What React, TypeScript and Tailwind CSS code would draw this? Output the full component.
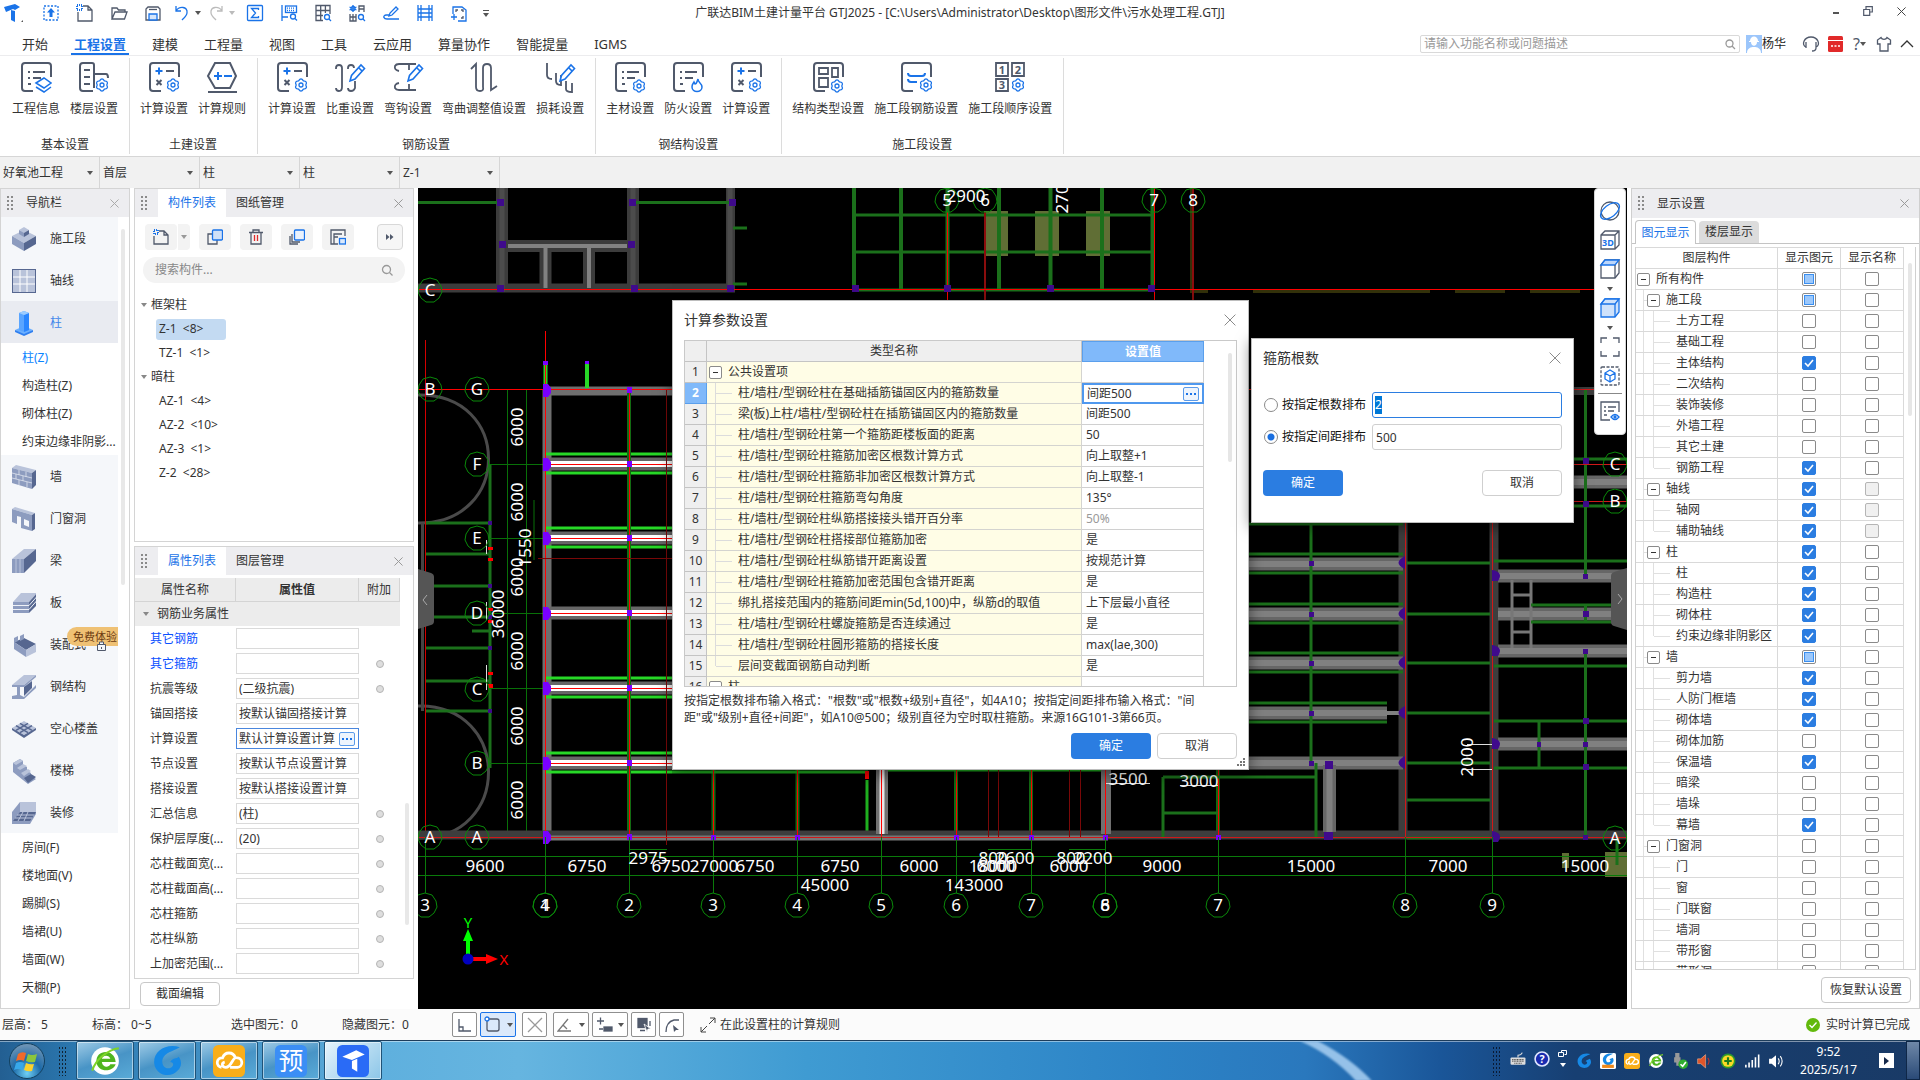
import React from 'react';

const FONT = "font-['Noto_Sans','Noto_Sans_CJK_SC',sans-serif]";
const D = '#50596b';
const B = '#1a73e8';

function Svg({ s = 18, children, vb }: { s?: number; children: React.ReactNode; vb?: string }) {
  return (
    <svg width={s} height={s} viewBox={vb ?? `0 0 ${s} ${s}`} fill="none" stroke={D} strokeWidth={1.3} className="shrink-0" aria-hidden="true">
      {children}
    </svg>
  );
}

function Caret({ color = '#555' }: { color?: string }) {
  return (
    <svg width="6" height="4" viewBox="0 0 6 4" className="shrink-0" aria-hidden="true">
      <path d="M0 0h6L3 4z" fill={color} />
    </svg>
  );
}

function Cross({ s = 10, color = '#8a8a8a' }: { s?: number; color?: string }) {
  return (
    <svg width={s} height={s} viewBox="0 0 10 10" stroke={color} strokeWidth={10 / s} aria-hidden="true">
      <path d="M.5 .5l9 9M9.5 .5l-9 9" />
    </svg>
  );
}

function Grip() {
  return (
    <svg width="7" height="15" viewBox="0 0 7 15" fill="#8a8a8a" className="shrink-0" aria-hidden="true">
      {[0, 4, 8, 12].map((y) => (
        <g key={y}>
          <rect x="0" y={y} width="2" height="2" />
          <rect x="4" y={y} width="2" height="2" />
        </g>
      ))}
    </svg>
  );
}

function Gear({ x, y, k = 1 }: { x: number; y: number; k?: number }) {
  return (
    <g transform={`translate(${x} ${y}) scale(${k})`} stroke={B} strokeWidth={1.3}>
      <path fill="#fff" d="M-2.4-4.2Q0-8 2.4-4.2Q6.8-3.9 4.8 0Q6.8 3.9 2.4 4.2Q0 8-2.4 4.2Q-6.8 3.9-4.8 0Q-6.8-3.9-2.4-4.2z" />
      <circle r="2" />
    </g>
  );
}

/* ---------- title bar ---------- */

const quick: { name: string; icon: React.ReactNode; caret?: string }[] = [
  { name: '升级', icon: <Svg><rect x="2" y="2" width="14" height="14" stroke={B} strokeDasharray="2 1.5" /><path d="M9 4l4 4.500h-2.500V13h-3V8.500H5z" fill={B} stroke="none" /></Svg> },
  { name: '新建', icon: <Svg><path d="M7 2h5l4 4v11H2V8M12 2v4h4" /><path d="M1 1h5v5H1z" stroke={B} strokeDasharray="1 1" strokeWidth="2" /></Svg> },
  { name: '打开', icon: <Svg><path d="M2 15V4h5l1.500 2H15v2M2 15l3-7h12l-2.500 7z" /></Svg> },
  { name: '保存', icon: <Svg><path d="M2 5V16h14V5l-2-2H4z" /><path d="M5 10h8v6H5z" stroke={B} fill="#d6e6fb" /><path d="M5 5.500h8" /></Svg> },
  { name: '撤销', icon: <Svg><path d="M3 2v5h5M3 7c3-5 12-5 11 2-.4 3-3 5-5 7" stroke={B} /></Svg>, caret: '#555' },
  { name: '恢复', icon: <Svg><path d="M15 2v5h-5M15 7C12 2 3 2 4 9c.4 3 3 5 5 7" stroke="#bbb" /></Svg>, caret: '#bbb' },
  { name: '汇总计算', icon: <Svg><rect x="1.500" y="1.500" width="15" height="15" rx="1" stroke={B} /><path d="M12.500 6V4.500h-7L9.500 9l-4 4.500h7V12" stroke={B} /></Svg> },
  { name: '查看工程量', icon: <Svg><path d="M2 1v16M2 13h6" stroke={B} /><rect x="5.500" y="2" width="11" height="6.500" stroke={B} /><path d="M7 4.200h8M7 6.500h8" stroke={B} strokeDasharray="1 1" /><circle cx="13" cy="12.500" r="2.500" stroke={B} /><path d="M15 14.500l2 2" stroke={B} /></Svg> },
  { name: '查看报表', icon: <Svg><path d="M9 16.500H2v-15h14V10M2 6.500h14M2 11.500h7M6.700 1.500v15M11.400 1.500V9" stroke={D} /><circle cx="13" cy="13" r="2.500" stroke={B} /><path d="M15 15l2 2" stroke={B} /></Svg> },
  { name: '查找', icon: <Svg><path d="M5 1v7M1.500 3l7 3M8.500 3l-7 3" stroke={B} /><circle cx="5" cy="4.500" r="2" stroke={B} /><path d="M11 8V2h5v6M11 5h5M2 10v7h6v-7M2 13h6M5 10v7" /><circle cx="13" cy="13" r="2.500" stroke={B} /><path d="M15 15l2 2" stroke={B} /></Svg> },
  { name: '编辑', icon: <Svg><path d="M7 12l1-3 6-6 2 2-6 6z" stroke={B} /><path d="M7 11H4c-4 1-2 4 1 4h12" stroke={B} /></Svg> },
  { name: '楼层', icon: <Svg><path d="M2 1v16M16 1v16M5 1v16M13 1v16M2 5h14M2 9h14M2 13h14" stroke={B} /></Svg> },
  { name: '选区', icon: <Svg><path d="M3 10V3h9l4 3v11H8" stroke={B} /><path d="M6 8V6h2M13 8V6h-2M13 12v2h-2" /><path d="M1 13h6M4 10v6" stroke={B} /></Svg> },
];

function TitleBar() {
  return (
    <header className="flex h-[26px] shrink-0 items-center bg-white">
      <div className="flex w-1/3 items-center">
        <div className="flex w-[34px] pl-1">
          <svg width="20" height="20" viewBox="0 0 20 20" aria-hidden="true">
            <path d="M0 4L11 1l5 3-5 3-2-1-7 3zM7 7l4 1v11l-4-2z" fill={B} />
            <path d="M17 19l2-2v2z" fill="#555" />
          </svg>
        </div>
        {quick.map((q) => (
          <button key={q.name} aria-label={q.name} className="flex w-[34px] items-center justify-center gap-1">
            {q.icon}
            {q.caret && <Caret color={q.caret} />}
          </button>
        ))}
        <button aria-label="更多" className="flex w-5 flex-col items-center gap-0.5">
          <span className="h-px w-1.5 bg-[#555]" />
          <Caret />
        </button>
      </div>
      <h1 className="w-1/3 whitespace-nowrap text-center text-xs leading-4 text-[#333]">
        广联达BIM土建计量平台 GTJ2025 - [C:\Users\Administrator\Desktop\图形文件\污水处理工程.GTJ]
      </h1>
      <div className="flex w-1/3 items-center justify-end gap-6 pr-3.5 pb-1">
        <button aria-label="最小化"><span className="mt-1 block h-0.5 w-1.5 bg-[#555]" /></button>
        <button aria-label="还原"><Svg s={10}><path d="M3 3V.7h6.300V6H7M.7 3.500h6v5.800h-6z" strokeWidth="1.200" /></Svg></button>
        <button aria-label="关闭"><Cross s={9} color="#444" /></button>
      </div>
    </header>
  );
}

const tabs = ['开始', '工程设置', '建模', '工程量', '视图', '工具', '云应用', '算量协作', '智能提量', 'IGMS'];

function MenuBar() {
  return (
    <nav className="flex h-[30px] shrink-0 items-end border-b border-[#ececee] bg-white pl-[9px] text-[13px]">
      {tabs.map((t) => (
        <button key={t} className={`mx-[10px] h-6 whitespace-nowrap border-b-2 px-[3px] pt-1 leading-4 ${t === '工程设置' ? 'border-[#1a73e8] font-bold text-[#1a73e8]' : 'border-transparent text-[#333]'}`}>
          {t}
        </button>
      ))}
      <div className="mb-px ml-auto flex h-[20px] items-center self-end pr-1.5 text-xs">
        <label className="flex h-[18px] w-80 items-center rounded-xs border border-[#d9d9d9] px-[3px]">
          <input aria-label="搜索功能" placeholder="请输入功能名称或问题描述" className="min-w-0 flex-1 bg-transparent leading-4 outline-none placeholder:text-[#999]" />
          <Svg s={12}><circle cx="5.500" cy="5.500" r="3.500" stroke="#999" /><path d="M8 8l3 3" stroke="#999" /></Svg>
        </label>
        <svg width="16" height="18" viewBox="0 0 16 18" className="ml-1.5" aria-hidden="true">
          <rect width="16" height="18" fill="#9cc6fb" />
          <path d="M4 6c0-6 8-6 8 0h1v1H3V6zM5 7h6c0 5-6 5-6 0zM1 18c0-5 4-6 7-6s7 1 7 6z" fill="#fff" />
        </svg>
        <span className="leading-4 text-[#222]">杨华</span>
        <button aria-label="客服" className="ml-4"><Svg s={18}><path d="M4 12C-1 10 2 2 9 2s10 8 5 10M4 7v6M14 7v6c0 2-2 3-4 3" /></Svg></button>
        <button aria-label="消息" className="ml-2">
          <svg width="15" height="16" viewBox="0 0 15 16" aria-hidden="true"><rect width="15" height="16" rx="1.500" fill="#e12a2a" /><path d="M0 4.500h15" stroke="#fff" /><path d="M3 10h2M6.500 10h2M10 10h2" stroke="#fff" strokeWidth="1.500" /></svg>
        </button>
        <button aria-label="帮助" className="ml-2.5 flex items-center text-base leading-4 text-[#50596b]">?<Caret /></button>
        <button aria-label="皮肤" className="ml-2.5"><Svg s={16}><path d="M5 1.500L1.500 4v4H4v7h8V8h2.500V4L11 1.500C10 4 6 4 5 1.500z" /></Svg></button>
        <button aria-label="收起" className="ml-2"><Svg s={14}><path d="M1 10l6-6 6 6" stroke="#333" /></Svg></button>
      </div>
    </nav>
  );
}

/* ---------- ribbon ---------- */

const docPath = 'M13 30H5Q2 30 2 27V5Q2 2 5 2H28Q31 2 31 5V16';
const pencil = <path d="M16 20l1.500-5.500L27 4l3.500 3.500L21 18z M24.500 6.500l3.500 3.500" stroke={B} fill="#fff" strokeWidth="1.600" />;

const calcIcon = (
  <Svg s={32}>
    <path d={docPath} strokeWidth="2" />
    <path d="M7.500 10h7M11 6.500v7" stroke={B} strokeWidth="2" />
    <path d="M18 10h8M8.500 19l5 5M13.500 19l-5 5" strokeWidth="2" />
    <Gear x={25} y={24} />
  </Svg>
);
const lines = <path d="M8 11h2M13 11h12M8 17h2M13 17h8M8 23h3" strokeWidth="2" />;

const ribbon: { name: string; items: { name: string; icon: React.ReactNode }[] }[] = [
  {
    name: '基本设置',
    items: [
      { name: '工程信息', icon: <Svg s={32}><path d={docPath} strokeWidth="2" />{lines}<path d="M16 22l8-5 7 5-7 5zM16 26l8 5 7-5" fill="#fff" stroke={B} strokeWidth="1.500" /></Svg> },
      { name: '楼层设置', icon: <Svg s={32}><path d="M15 30H5Q2 30 2 27V5Q2 2 5 2H14Q16 2 16 4V27M16 13H28Q30 13 30 17M6 9h6M6 16h6M6 23h6" strokeWidth="2" /><Gear x={24} y={24} /></Svg> },
    ],
  },
  {
    name: '土建设置',
    items: [
      { name: '计算设置', icon: calcIcon },
      { name: '计算规则', icon: <Svg s={32}><path d="M9 2H24L30 15 24 27H9L2 15zM2 31H31" strokeWidth="2" /><path d="M8 15h8M12 11v8M18 15h8" stroke={B} strokeWidth="2" /></Svg> },
    ],
  },
  {
    name: '钢筋设置',
    items: [
      { name: '计算设置', icon: calcIcon },
      { name: '比重设置', icon: <Svg s={32}><path d="M2 8V7Q2 4 5 4T8 7V26Q8 30 5 30T2 27M14 8V7Q14 4 17 4T20 7M14 27Q14 30 17 30T21 27V20" strokeWidth="1.800" />{pencil}</Svg> },
      { name: '弯钩设置', icon: <Svg s={32}><path d="M7 10Q2 9 3 5 4 3 7 3H24M7 22Q2 23 3 27 4 29 7 29H24M17 4V9M17 23V28" strokeWidth="1.800" />{pencil}</Svg> },
      { name: '弯曲调整值设置', icon: <Svg s={32}><path d="M3 8L8 3V26Q8 30 12 30T15 26V7Q15 3 19 3T23 7V29L29 25" strokeWidth="1.800" /></Svg> },
      { name: '损耗设置', icon: <Svg s={32}><path d="M3 2V14Q3 18 8 18M12 12V20Q12 24 17 24V14M22 20V28Q22 31 28 31V22" strokeWidth="1.800" />{pencil}</Svg> },
    ],
  },
  {
    name: '钢结构设置',
    items: [
      { name: '主材设置', icon: <Svg s={32}><path d={docPath} strokeWidth="2" />{lines}<Gear x={25} y={25} /></Svg> },
      { name: '防火设置', icon: <Svg s={32}><path d={docPath} strokeWidth="2" />{lines}<path d="M26 18c0 4 4 4 4 8 0 6-10 6-10 0 0-3 1-3 2-5l1 2c2 0 2-3 3-5z" stroke={B} fill="#fff" strokeWidth="1.500" /></Svg> },
      { name: '计算设置', icon: calcIcon },
    ],
  },
  {
    name: '施工段设置',
    items: [
      { name: '结构类型设置', icon: <Svg s={32}><path d={docPath} strokeWidth="2" /><path d="M7 7h9v6H7zM20 7h6v9h-6zM7 17h9v9H7z" strokeWidth="1.800" /><Gear x={25} y={25} /></Svg> },
      { name: '施工段钢筋设置', icon: <Svg s={32}><path d={docPath} strokeWidth="2" /><path d="M8 12q0 3 3 3h11q3 0 3-3M8 18q0 3 3 3h6" stroke={B} strokeWidth="2" /><Gear x={26} y={24} /></Svg> },
      {
        name: '施工段顺序设置',
        icon: (
          <Svg s={32}>
            <path d="M2 2h12v13H2zM18 2h12v13H18zM2 18h12v12H2z" strokeWidth="1.800" />
            <g fill={D} stroke="none" fontSize="11" fontWeight="bold" textAnchor="middle"><text x="8" y="12.500">1</text><text x="24" y="12.500">2</text><text x="8" y="28">3</text></g>
            <Gear x={24} y={24} />
          </Svg>
        ),
      },
    ],
  },
];

function Ribbon() {
  return (
    <section className="flex h-[101px] shrink-0 border-b border-[#d6d6d6] bg-white pl-0.5 text-xs leading-4 text-[#333]">
      {ribbon.map((g) => (
        <div key={g.name} className="my-0.5 flex flex-col items-center border-r border-[#dcdcdc] pr-[11px] pl-2.5 pt-[3px]">
          <div className="flex gap-2.5">
            {g.items.map((i) => (
              <button key={i.name} className="flex flex-col items-center gap-2 whitespace-nowrap">
                {i.icon}
                {i.name}
              </button>
            ))}
          </div>
          <span className="mt-5">{g.name}</span>
        </div>
      ))}
    </section>
  );
}

function ContextBar() {
  return (
    <section className="flex h-[31px] shrink-0 bg-[#f1f1f1] text-xs text-[#333]">
      {['好氧池工程', '首层', '柱', '柱', 'Z-1'].map((v, i) => (
        <label key={i} className="flex w-[100px] items-center border-r border-[#d6d6d6] pr-1.5 pl-[3px]">
          <select aria-label={`选择${i + 1}`} className="min-w-0 flex-1 appearance-none bg-transparent leading-4 outline-none">
            <option>{v}</option>
          </select>
          <Caret />
        </label>
      ))}
    </section>
  );
}

/* ---------- navigation ---------- */

const L = '#b9c3da';
const M = '#8d9cbf';
const K = '#566790';

const navIcons: Record<string, React.ReactNode> = {
  施工段: <><path d="M0 10l12-6 12 6-12 7z" fill={L} /><path d="M0 10l12 7v8L0 18z" fill={M} /><path d="M24 10l-12 7v8l12-7z" fill={K} /><path d="M7 4l5-3 5 3-5 3z" fill={L} /><path d="M7 4l5 3v4L7 8z" fill={M} /><path d="M17 4l-5 3v4l5-3z" fill={K} /></>,
  轴线: <><path d="M0 1h24v24H0z" fill={K} /><path d="M1 2h22v22H1z" fill={L} /><path d="M1 9h22M1 16h22M8 2v22M15 2v22" stroke="#fff" /></>,
  柱: <><path d="M3 20l9-4 9 4-9 5z" fill="#6cb0ff" /><path d="M3 20l9 4v2l-9-4zM21 20l-9 4v2l9-4z" fill="#2f7ff0" /><path d="M7 3l5-2 5 2v17l-5 2-5-2z" fill="#5aa5ff" /><path d="M12 5l5-2v17l-5 2z" fill="#2a86ff" /><path d="M7 3l5-2 5 2-5 2z" fill="#9cccff" /></>,
  墙: <><path d="M0 4l4-3 20 5-4 3z" fill={L} /><path d="M0 4l20 5v16L0 19z" fill={M} /><path d="M20 9l4-3v15l-4 4z" fill={K} /><path d="M0 9l20 5M0 14l20 5M7 6v5M14 8v5M4 10v5M11 12v5M7 16v5M15 18v5" stroke="#dfe4ef" strokeWidth=".8" /></>,
  门窗洞: <><path d="M0 3l3-2 20 6-3 2z" fill={L} /><path fillRule="evenodd" d="M0 3l20 6v16l-11-3v-11l-4-1v8l-5-2zM12 13v6l5 2v-6z" fill={M} /><path d="M20 9l3-2v16l-3 2z" fill={K} /></>,
  梁: <><path d="M0 11L12 1h12L12 11z" fill={L} /><path d="M12 11L24 1v12L12 25z" fill={K} /><path d="M0 11h12v14H0z" fill={M} /><path d="M4 11v14M8 11v14" stroke={L} /></>,
  板: <><path d="M1 12L9 3h16l-8 9z" fill={L} /><path d="M1 12h16v11H1z" fill={M} /><path d="M17 12l8-9v12l-8 8z" fill={K} /><path d="M1 15.500h16l8-9M1 19.500h16l8-9" stroke="#eef1f7" fill="none" /></>,
  装配式: <><path d="M2 10l10-4 12 6-10 6z" fill={K} /><path d="M2 10l12 8v7L2 17z" fill={M} /><path d="M24 12v8l-10 5v-7z" fill={L} /><path d="M2 6l4-2v5l-4 2zM8 4l4-2v5L8 9z" fill={M} /></>,
  钢结构: <><path d="M0 11L12 1h12L12 11z" fill={L} /><path d="M12 11L24 1v2L12 13H8v8l4 2L24 11v3L12 25H0v-3l5-1v-8H0v-2z" fill={M} /><path d="M12 13l8-6v7l-8 8z" fill={K} /></>,
  空心楼盖: <><path d="M0 12l12-7 12 7-12 7z" fill={L} /><path d="M0 12l12 7v3L0 14zM24 12l-12 7v3l12-8z" fill={K} /><path d="M4 14.300l12-7M8 16.700l12-7M4 9.700l12 7M8 7.300l12 7" stroke={K} strokeWidth="1.500" /></>,
  楼梯: <><path d="M1 5l7-4 3 2v4l4 2v4l4 2v3l5 3-8 5L1 14z" fill={M} /><path d="M1 5l7-4 3 2-7 4zM5 10l6-4 4 2-7 4zM9 15l7-4 3 2-7 5z" fill={L} /><path d="M12 20l7-4 5 3-8 6z" fill={K} /></>,
  装修: <><path d="M0 12L8 2h16v12l-6 10H0z" fill={M} /><path d="M8 2h16v10H8z" fill={L} /><path d="M8 12h16l-6 9H1z" fill={K} /><path d="M5 15h17M3 18h17M11 12l-5 9M16 12l-4 9" stroke={L} /></>,
};

function NavItem({ name, active }: { name: string; active?: boolean }) {
  return (
    <li className="relative w-[117px] overflow-hidden">
      <a href="#" className={`flex h-[42px] items-center gap-3.5 pt-px pl-[11px] ${active ? 'bg-[#e9ebf1] text-[#3f86ea]' : 'bg-[#f5f7fa] text-[#333]'}`}>
        <svg width="24" height="26" viewBox="0 0 24 26" className="shrink-0" aria-hidden="true">{navIcons[name]}</svg>
        {name}
      </a>
      {name === '装配式' && (
        <span className="absolute top-1 right-0 flex h-[19px] w-[51px] items-center rounded-l-full bg-[#efc174] pl-1.5 text-[11px] leading-4 whitespace-nowrap text-[#6b3a10]">
          免费体验
          <svg width="9" height="10" viewBox="0 0 9 10" className="absolute top-3.5 left-[30px]" aria-hidden="true"><path d="M.5 3.500h8v6h-8zM2.500 3V1h4v2" fill="#f5f7fa" stroke={D} /><path d="M4 6h1v2H4z" fill={D} /></svg>
        </span>
      )}
    </li>
  );
}

function SubItem({ name, active }: { name: string; active?: boolean }) {
  return (
    <li>
      <a href="#" className={`block h-7 pt-px pl-[21px] leading-7 whitespace-nowrap ${active ? 'text-[#0a84ff]' : 'text-[#333]'}`}>{name}</a>
    </li>
  );
}

function NavPanel() {
  return (
    <aside className="flex w-[130px] shrink-0 flex-col border border-[#d4d4d4] bg-white text-xs">
      <div className="flex h-[28px] shrink-0 items-center bg-[#ededf0] pr-2.5 pl-1.5">
        <Grip />
        <h2 className="ml-3 leading-4 text-[#333]">导航栏</h2>
        <button aria-label="关闭导航栏" className="ml-auto"><Cross s={9} color="#aaa" /></button>
      </div>
      <div className="flex min-h-0 flex-1">
        <ul className="w-[117px] overflow-hidden">
          <NavItem name="施工段" />
          <NavItem name="轴线" />
          <NavItem name="柱" active />
          <SubItem name="柱(Z)" active />
          <SubItem name="构造柱(Z)" />
          <SubItem name="砌体柱(Z)" />
          <SubItem name="约束边缘非阴影..." />
          {['墙', '门窗洞', '梁', '板', '装配式', '钢结构', '空心楼盖', '楼梯', '装修'].map((n) => <NavItem key={n} name={n} />)}
          {['房间(F)', '楼地面(V)', '踢脚(S)', '墙裙(U)', '墙面(W)', '天棚(P)'].map((n) => <SubItem key={n} name={n} />)}
        </ul>
        <div className="mt-3 ml-[3px] h-[356px] w-1 rounded-full bg-[#e8e8e8]" />
      </div>
    </aside>
  );
}

function TabHeader({ active, other }: { active: string; other: string }) {
  return (
    <div className="flex h-[28px] shrink-0 items-center bg-[#ededf0] pr-2.5 pl-1.5">
      <Grip />
      <button className="ml-2.5 h-full w-[68px] bg-white text-[#1a73e8]">{active}</button>
      <button className="ml-2.5 text-[#333]">{other}</button>
      <button aria-label={`关闭${active}`} className="ml-auto"><Cross s={9} color="#999" /></button>
    </div>
  );
}

const toolBtn = 'flex h-[26px] w-8 items-center justify-center rounded bg-[#f3f3f3]';

function TreeGroup({ name, items, sel }: { name: string; items: string[]; sel?: string }) {
  return (
    <li>
      <div className="flex h-6 items-center gap-1 pl-1.5 text-[#333]"><Caret color="#888" />{name}</div>
      <ul>
        {items.map((i) => (
          <li key={i} className="flex h-6 items-center pl-[21px]">
            <button className={`h-[21px] w-[70px] rounded-[3px] px-[3px] text-left whitespace-pre ${i === sel ? 'bg-[#c3daf2]' : ''}`}>{i}</button>
          </li>
        ))}
      </ul>
    </li>
  );
}

const props: { n: string; v?: string; dot?: boolean; blue?: boolean; active?: boolean }[] = [
  { n: '其它钢筋', blue: true },
  { n: '其它箍筋', blue: true, dot: true },
  { n: '抗震等级', v: '(二级抗震)', dot: true },
  { n: '锚固搭接', v: '按默认锚固搭接计算' },
  { n: '计算设置', v: '默认计算设置计算', active: true },
  { n: '节点设置', v: '按默认节点设置计算' },
  { n: '搭接设置', v: '按默认搭接设置计算' },
  { n: '汇总信息', v: '(柱)', dot: true },
  { n: '保护层厚度(...', v: '(20)', dot: true },
  { n: '芯柱截面宽(...', dot: true },
  { n: '芯柱截面高(...', dot: true },
  { n: '芯柱箍筋', dot: true },
  { n: '芯柱纵筋', dot: true },
  { n: '上加密范围(...', dot: true },
];

function DotsButton({ label }: { label: string }) {
  return (
    <button aria-label={label} className="flex h-[14px] w-4 shrink-0 items-center justify-center gap-0.5 rounded-xs border border-[#5b9bea] bg-[#edf4fd]">
      {[0, 1, 2].map((k) => <span key={k} className="h-0.5 w-0.5 bg-[#1a73e8]" />)}
    </button>
  );
}

function ComponentColumn() {
  return (
    <div className="mx-1 flex w-[280px] shrink-0 flex-col text-xs leading-4 text-[#333]">
      <section className="h-[354px] shrink-0 border border-[#d4d4d4] bg-white">
        <TabHeader active="构件列表" other="图纸管理" />
        <div className="mt-[7px] flex items-center pr-2.5 pl-2.5">
          <button aria-label="新建构件" className={toolBtn}><Svg s={16}><path d="M6 2h5l4 4v9H1V7M11 2v4h4" /><path d="M1 1h4v4H1z" stroke={B} strokeDasharray="1 1" strokeWidth="2" /></Svg></button>
          <button aria-label="新建选项" className="ml-px flex h-[26px] w-3 items-center justify-center rounded-r bg-[#f3f3f3]"><Caret color="#999" /></button>
          <button aria-label="复制" className={`${toolBtn} ml-[9px]`}><Svg s={16}><path d="M6 5H1v10h9v-4" /><rect x="5.500" y="1" width="10" height="10" rx="1" stroke={B} fill="#cfe0f7" /></Svg></button>
          <button aria-label="删除" className={`${toolBtn} ml-[9px]`}><Svg s={16}><path d="M1 3.500h14M5 3.500V1h6v2.500M3 3.500V15h10V3.500" /><path d="M6.500 6v6M9.500 6v6" stroke="#e12a2a" /></Svg></button>
          <button aria-label="层间复制" className={`${toolBtn} ml-[9px]`}><Svg s={16}><path d="M3 5v8h8M1 7v8h8" /><rect x="5.500" y="1" width="10" height="10" rx="1" stroke={B} fill="#eaf2fd" /></Svg></button>
          <button aria-label="存档" className={`${toolBtn} ml-[9px]`}><Svg s={16}><path d="M8 15H1V1h14v6M4 15V5h8M4 8h4" /><rect x="9.500" y="9.500" width="6" height="5.500" stroke={B} fill="#dbe9fb" /></Svg></button>
          <button aria-label="更多工具" className="ml-auto flex h-[26px] w-[26px] items-center justify-center rounded border border-[#d8d8d8] bg-[#f6f6f6]"><svg width="8" height="6" viewBox="0 0 8 6" fill={D} aria-hidden="true"><path d="M0 0l3.500 3L0 6zM4 0l3.500 3L4 6z" /></svg></button>
        </div>
        <label className="mx-2 mt-[7px] flex h-[26px] items-center rounded-full bg-[#f3f3f3] px-3">
          <input aria-label="搜索构件" placeholder="搜索构件..." className="min-w-0 flex-1 bg-transparent outline-none placeholder:text-[#888]" />
          <Svg s={12}><circle cx="5.500" cy="5.500" r="4" stroke="#999" /><path d="M8.500 8.500l3 3" stroke="#999" /></Svg>
        </label>
        <ul className="mt-2.5">
          <TreeGroup name="框架柱" items={['Z-1  <8>', 'TZ-1  <1>']} sel="Z-1  <8>" />
          <TreeGroup name="暗柱" items={['AZ-1  <4>', 'AZ-2  <10>', 'AZ-3  <1>', 'Z-2  <28>']} />
        </ul>
      </section>
      <section className="mt-1 flex min-h-0 flex-1 flex-col border border-[#d4d4d4] bg-white">
        <TabHeader active="属性列表" other="图层管理" />
        <div className="flex min-h-0 flex-1 overflow-hidden">
          <table className="mt-[3px] h-fit w-[265px] shrink-0 table-fixed border-separate border-spacing-0">
            <thead>
              <tr className="h-6 bg-[#ececec]">
                <th className="w-[101px] border-r border-b border-[#d4d4d4] font-normal">属性名称</th>
                <th className="border-r border-b border-[#d4d4d4] font-bold">属性值</th>
                <th className="w-[41px] border-r border-b border-[#d4d4d4] font-normal">附加</th>
              </tr>
            </thead>
            <tbody>
              <tr className="h-6 bg-[#ececec]">
                <td colSpan={3}><span className="flex items-center gap-2 pl-2"><Caret color="#888" />钢筋业务属性</span></td>
              </tr>
              {props.map((p) => (
                <tr key={p.n} className="h-[25px]">
                  <td className={`pl-[15px] ${p.blue ? 'text-[#0a50ff]' : ''}`}>{p.n}</td>
                  <td>
                    <div className={`flex h-[21px] items-center border pr-[3px] pl-0.5 ${p.active ? 'border-[#4a86dd]' : 'border-[#dadada]'}`}>
                      <input aria-label={p.n} defaultValue={p.v ?? ''} className="min-w-0 flex-1 bg-transparent leading-4 outline-none" />
                      {p.active && <DotsButton label="打开计算设置" />}
                    </div>
                  </td>
                  <td>{p.dot && <span className="mx-auto block h-2 w-2 rounded-full border border-[#b5b5b5] bg-[#dedede]" />}</td>
                </tr>
              ))}
            </tbody>
          </table>
          <div className="mb-[53px] ml-[5px] h-[122px] w-1 self-end rounded-full bg-[#e8e8e8]" />
        </div>
      </section>
      <div className="flex h-[30px] shrink-0 items-center pl-1.5">
        <button className="h-6 w-20 rounded border border-[#c8c8c8] bg-white">截面编辑</button>
      </div>
    </div>
  );
}

/* ---------- drawing ---------- */

function Bubble({ x, y, t }: { x: number; y: number; t: string }) {
  return (
    <g>
      <polygon transform={`translate(${x} ${y})`} points="0,-12 7,-10 11,-4 12,2 9,8 4,12 -4,12 -9,8 -12,2 -11,-4 -7,-10" fill="none" stroke="#0a8a0a" />
      <text x={x} y={y + 6} fill="#fff" textAnchor="middle">{t}</text>
    </g>
  );
}

function Band({ y, x1, x2, core = '#808080', green }: { y: number; x1: number; x2: number; core?: string; green?: string }) {
  return (
    <g>
      <path d={`M${x1} ${y}H${x2}`} stroke="#666" strokeWidth="13" />
      <path d={`M${x1} ${y}H${x2}`} stroke={core} strokeWidth="6" />
      {green && <path d={`M${x1 - 4} ${y - 10}H${x2}M${x1 - 4} ${y + 9}H${x2}`} stroke={green} strokeWidth="3" />}
    </g>
  );
}

const axisX: [number, string][] = [[425, '3'], [545, '4'], [545, '1'], [629, '2'], [713, '3'], [797, '4'], [881, '5'], [956, '6'], [1031, '7'], [1105, '8'], [1105, '6'], [1218, '7'], [1405, '8'], [1492, '9']];
const dims: [number, number, string][] = [
  [485, 872, '9600'], [587, 872, '6750'], [648, 864, '2975'], [671, 872, '6750'], [714, 872, '27000'], [755, 872, '6750'], [840, 872, '6750'], [919, 872, '6000'],
  [993, 872, '18000'], [996, 872, '6000'], [993, 864, '800'], [1015, 864, '2600'], [1069, 872, '6000'], [1071, 864, '800'], [1093, 864, '2200'], [1162, 872, '9000'], [1311, 872, '15000'], [1448, 872, '7000'], [1585, 872, '15000'],
  [825, 891, '45000'], [974, 891, '143000'], [1128, 785, '3500'], [1199, 787, '3000'], [966, 202, '2900'],
];
const vdims: [number, number, string][] = [[517, 427, '6000'], [517, 502, '6000'], [517, 577, '6000'], [517, 651, '6000'], [517, 726, '6000'], [517, 800, '6000'], [498, 614, '36000'], [525, 548, '1550'], [1467, 757, '2000'], [1062, 194, '2700']];

const G = '#1b701b';
const V = '#3f0a8c';

function Drawing() {
  return (
    <svg viewBox="418 188 1209 821" preserveAspectRatio="xMinYMin slice" className="h-full w-full" fontSize="17" fill="none" role="img" aria-label="结构平面图">
      {/* upper left walls */}
      <path d="M418 288H735M502 188V292M633 188V292M730.500 188V292" stroke="#3c3c3c" strokeWidth="9" />
      <path d="M502 188V292M633 188V292" stroke="#3c3c3c" strokeWidth="12" />
      <path d="M502 188V292M633 188V292M730 188V292" stroke="#4c4c4c" strokeWidth="5" />
      <path d="M508 246H627M545.500 246V288M589 246V288" stroke="#3c3c3c" strokeWidth="12" />
      <path d="M508 246H627M545.500 246V288M589 246V288" stroke="#828282" strokeWidth="4" />
      <path d="M418 202.500H500M635 202.500H730M733 228H747M733 284H747" stroke={G} strokeWidth="3" />
      {/* grid block */}
      <path d="M984 211h24v45h-24zM1035 211h24v45h-24zM1086 211h24v45h-24z" fill="#606e35" />
      <path d="M854 188V290M901 188V290M947.500 188V290M999 188V290M1050.500 188V290M1102 188V290M1152.500 188V290" stroke={G} strokeWidth="4" />
      <path d="M854 215H1152M854 252H1152M854 290H1152" stroke={G} strokeWidth="3" />
      <path d="M1190 291h18M1253 291h177M1455 291h50M1530 291h50M1192 188V292" stroke="#33310a" strokeWidth="4" />
      <path d="M985 212V300M1193 188V300" stroke="#8b0d0d" strokeWidth="2" />
      <path d="M418 289.500H1594M947.500 212V300M1154.500 188V300" stroke="#f00" />

      {/* tanks at the left edge */}
      <path d="M418 395C512 393 512 524 418 523M418 706C512 704 512 840 418 838" stroke="#4a4a4a" strokeWidth="3" />
      <path d="M422.500 523V711" stroke="#444" strokeWidth="3" />
      <path d="M490 464V768M425 523H490M425 554H490M425 586H490M425 617H490M472 631H490M425 648H490M425 681H490M425 711H490" stroke={G} strokeWidth="3" />
      <path d="M507.500 389V837M526.500 389V837M534 500V560M490 464.500H545M490 538.500H545M490 613.500H545M490 688.500H545M490 763.500H545" stroke="#087008" />
      <path d="M425.500 340V837M545.500 331V837" stroke="#d40000" />

      {/* main building */}
      <path d="M545 391H1249M547 390V837" stroke="#6e6e6e" strokeWidth="9" />
      <path d="M545.500 362V388M587 364V388" stroke="#27d827" strokeWidth="4" />
      <Band y={464} x1={550} x2={1249} core="#fff" green="#27d827" />
      <Band y={538} x1={550} x2={1249} core="#fff" green="#27d827" />
      <Band y={613} x1={550} x2={1249} core="#fff" />
      <Band y={688} x1={550} x2={1249} core="#fff" green="#27d827" />
      <Band y={763} x1={550} x2={672} core="#fff" green="#27d827" />
      <path d="M629 390V837M713.500 769V837M797.500 769V837M956 769V837M1031 769V837M1218 769V837" stroke="#126a12" strokeWidth="4" />
      <path d="M672 772H868M882 770H1108M867 780V836" stroke="#1faf1f" strokeWidth="3" />
      <path d="M418 835H1627" stroke="#3d3d3d" strokeWidth="9" />
      <path d="M545 838H1108" stroke="#777" strokeWidth="5" />
      <path d="M882 769V834" stroke="#707070" strokeWidth="12" />
      <path d="M882 769V834" stroke="#e8e8e8" strokeWidth="5" />
      <path d="M1106 769V834" stroke="#707070" strokeWidth="10" />
      <path d="M545.500 331V837M629.500 390V837M713.500 769V837M797.500 769V837M881.500 769V837M956.500 769V837M1031.500 769V837M1105.500 769V837M1218.500 769V837M418 389.500H1594M545 464.500H672M545 538.500H672M545 613.500H672M545 688.500H672M545 763.500H672" stroke="#f00" />
      <path d="M666.500 390V845M538 558.500H672M988.500 769V837M998.500 769V837M1069.500 769V837M1080.500 769V837" stroke="#7a0808" />

      {/* right building */}
      <path d="M1403 522V837M1494 522V837" stroke="#3d3d3d" strokeWidth="9" />
      <Band y={564} x1={1249} x2={1403} green={G} />
      <Band y={614} x1={1249} x2={1403} green={G} />
      <Band y={663} x1={1249} x2={1403} green={G} />
      <Band y={713} x1={1249} x2={1387} green={G} />
      <path d="M1387 713H1403" stroke="#808080" strokeWidth="4" />
      <Band y={763} x1={1249} x2={1403} />
      <path d="M1329.500 765V832" stroke="#666" strokeWidth="13" />
      <path d="M1329.500 765V832" stroke="#808080" strokeWidth="6" />
      <path d="M1311 522V763M1316 763V837M1163 777H1316M1163 813H1218M1163 777V837M1407 563H1490M1407 614H1490M1407 663H1490M1407 713H1490M1407 763H1490M1407 800H1490M1407 838H1490M1249 524H1403" stroke={G} strokeWidth="3" />
      <Band y={576} x1={1498} x2={1627} />
      <Band y={614} x1={1498} x2={1627} />
      <Band y={651} x1={1498} x2={1627} />
      <Band y={744} x1={1498} x2={1627} />
      <Band y={482} x1={1570} x2={1627} />
      <path d="M1512 580V648M1531 580V648M1512 595H1531M1512 632H1531" stroke="#777" strokeWidth="3" />
      <path d="M1574 391H1594" stroke="#3d3d3d" strokeWidth="8" />
      <path d="M1494 561H1627M1531 605H1627M1531 622H1627M1494 666H1627M1494 721H1627M1494 768H1627M1539 721V768M1585.500 390V576M1585.500 605V622M1585.500 651V837M1570 459H1627M1570 506H1627" stroke={G} strokeWidth="3" />
      <path d="M1405.500 522V837M1492.500 522V837M1570 464.500H1627M1570 501.500H1627M418 837.500H1627M1574 389.500H1594" stroke="#d01818" />
      <path d="M1605 852h22v25h-22zM1562 853h7v15h-7z" fill="#606e35" />
      <path d="M1617 838V865" stroke={G} strokeWidth="3" />

      {/* columns */}
      <g fill={V}>
        {[[500, 202], [632, 202], [732, 202], [502, 244], [631, 244], [500, 288], [634, 288], [730, 288], [855, 288], [947, 288], [1050, 288], [1151, 288]].map(([x, y]) => <rect key={`${x}-${y}`} x={x - 3} y={y - 3} width="7" height="7" />)}
        {[563, 614, 663, 713, 763].map((y) => <g key={y}><path d={`M1405 ${y - 7}q-13 7 0 13z`} /><rect x="1309" y={y - 2} width="5" height="5" /></g>)}
        {[576, 651, 744, 837].map((y) => <g key={y}><path d={`M1492 ${y - 6}q12 2 6 11h-6z`} /><rect x="1583" y={y - 2} width="5" height="5" /></g>)}
        {[461, 504, 614, 721, 767].map((y) => <rect key={y} x="1583" y={y - 3} width="6" height="6" />)}
        {[523, 586, 617, 648, 711].map((y) => <rect key={y} x="488" y={y - 2} width="4" height="4" />)}
        <path d="M1325 761h8v8h-8zM1324 832h9v8h-9zM1537 742h4v5h-4z" />
      </g>
      <g fill="#7a00ff">
        {[390, 464, 538, 613, 688, 763, 837].map((y) => <g key={y}><path d={`M543 ${y - 6}h5l3 4v5l-3 4h-5z`} /><rect x="627" y={y - 3} width="5" height="6" /></g>)}
        {[713, 797, 956, 1031, 1105, 1218].map((x) => <rect key={x} x={x - 2} y="835" width="5" height="5" />)}
        <path d="M543 361h5v4h-5zM585 361h4v3h-4z" />
      </g>

      {/* dimension lines and axis marks */}
      <path d="M418 856.500H1627M418 875.500H1627M425.500 837V893M545.500 837V893M629.500 837V893M713.500 837V893M797.500 837V893M881.500 837V893M956.500 837V893M1031.500 837V893M1105.500 837V893M1218.500 837V893M1405.500 837V893M1492.500 837V893" stroke="#0a7a0a" />
      <path d="M629 849.500H667M988 849.500H1031M1069 849.500H1105" stroke="#0a7a0a" />
      <path d="M1467 744.500H1492M1467 769.500H1492M1106 783.500H1150M1180 785.500H1218M486.500 540V554M486.500 690V665M486.500 602V620" stroke="#ddd" />
      <path d="M488 547h5v3h-5zM488 558h5v3h-5zM488 608h5v3h-5zM488 620h5v3h-5zM488 672h5v3h-5zM488 684h5v4h-5zM865 771h4v8h-4z" fill="#f00" />
      {axisX.map(([x, t], i) => <Bubble key={i} x={x} y={905} t={t} />)}
      {([[477, 389, 'G'], [477, 464, 'F'], [477, 538, 'E'], [477, 613, 'D'], [477, 689, 'C'], [477, 763, 'B'], [477, 837, 'A'], [430, 290, 'C'], [430, 389, 'B'], [430, 837, 'A'], [1615, 464, 'C'], [1615, 501, 'B'], [1615, 838, 'A'], [947, 200, '5'], [985, 200, '6'], [1154, 200, '7'], [1193, 200, '8']] as [number, number, string][]).map(([x, y, t]) => <Bubble key={`${x}${y}`} x={x} y={y} t={t} />)}
      <g fill="#fff" textAnchor="middle">
        {dims.map(([x, y, t], i) => <text key={i} x={x} y={y}>{t}</text>)}
        {vdims.map(([x, y, t], i) => <text key={i} transform={`translate(${x + 6} ${y}) rotate(-90)`}>{t}</text>)}
      </g>

      {/* coordinate origin */}
      <path d="M468 959V938" stroke="#0f0" strokeWidth="4" />
      <path d="M463 941l5-12 5 12z" fill="#0f0" />
      <path d="M468 959H487" stroke="#f00" strokeWidth="4" />
      <path d="M486 954l12 5-12 5z" fill="#f00" />
      <circle cx="468" cy="959" r="5.500" fill="#0000c0" />
      <text x="468" y="928" fill="#0f0" textAnchor="middle" fontSize="15">Y</text>
      <text x="504" y="965" fill="#f00" textAnchor="middle" fontSize="15">X</text>

      {/* collapse handles */}
      <path d="M418 569l13 4q3 1 3 4v44q0 3-3 4l-13 4z" fill="#555" />
      <path d="M1627 568l-13 4q-3 1-3 4v46q0 3 3 4l13 4z" fill="#555" />
      <path d="M427 595l-4 5 4 5M1618 594l4 5-4 5" stroke="#aaa" />
    </svg>
  );
}

/* ---------- dialogs ---------- */

const params: [string, string][] = [
  ['公共设置项', ''],
  ['柱/墙柱/型钢砼柱在基础插筋锚固区内的箍筋数量', '间距500'],
  ['梁(板)上柱/墙柱/型钢砼柱在插筋锚固区内的箍筋数量', '间距500'],
  ['柱/墙柱/型钢砼柱第一个箍筋距楼板面的距离', '50'],
  ['柱/墙柱/型钢砼柱箍筋加密区根数计算方式', '向上取整+1'],
  ['柱/墙柱/型钢砼柱箍筋非加密区根数计算方式', '向上取整-1'],
  ['柱/墙柱/型钢砼柱箍筋弯勾角度', '135°'],
  ['柱/墙柱/型钢砼柱纵筋搭接接头错开百分率', '50%'],
  ['柱/墙柱/型钢砼柱搭接部位箍筋加密', '是'],
  ['柱/墙柱/型钢砼柱纵筋错开距离设置', '按规范计算'],
  ['柱/墙柱/型钢砼柱箍筋加密范围包含错开距离', '是'],
  ['绑扎搭接范围内的箍筋间距min(5d,100)中，纵筋d的取值', '上下层最小直径'],
  ['柱/墙柱/型钢砼柱螺旋箍筋是否连续通过', '是'],
  ['柱/墙柱/型钢砼柱圆形箍筋的搭接长度', 'max(lae,300)'],
  ['层间变截面钢筋自动判断', '是'],
  ['柱', ''],
];

function Toggle() {
  return (
    <button aria-label="折叠" className="flex h-[13px] w-[13px] shrink-0 items-center justify-center rounded-xs border border-[#8a8a8a] bg-white">
      <span className="h-px w-[5px] bg-[#333]" />
    </button>
  );
}

const primary = 'h-[26px] w-20 rounded bg-[#2b7de1] text-white';
const plain = 'h-[26px] w-20 rounded border border-[#cfcfcf] bg-white text-[#333]';

function ParamsDialog() {
  return (
    <div role="dialog" aria-label="计算参数设置" className="absolute top-[112px] left-[254px] w-[577px] border border-[#bdbdbd] bg-white px-[11px] pb-[10px] text-xs leading-4 text-[#333] shadow-[0_4px_14px_rgba(0,0,0,0.5)]">
      <div className="flex h-[39px] items-center justify-between pr-[1px] pb-0.5">
        <h2 className="text-sm leading-5">计算参数设置</h2>
        <button aria-label="关闭计算参数设置"><Cross s={12} /></button>
      </div>
      <div className="flex h-[347px] overflow-hidden border border-[#c9c9c9]">
        <table className="h-fit w-[519px] shrink-0 table-fixed border-separate border-spacing-0">
          <thead>
            <tr className="h-[21px]">
              <th className="w-[22px] border-r border-b border-[#c4c4c4] bg-[#efefef]" />
              <th className="border-r border-b border-[#c4c4c4] bg-[#efefef] font-normal">类型名称</th>
              <th className="w-[122px] border border-[#5a9fec] bg-[#80b9fa] font-bold text-white">设置值</th>
            </tr>
          </thead>
          <tbody>
            {params.map(([n, v], i) => {
              const head = v === '';
              const sel = i === 1;
              return (
                <tr key={i} className="h-[21px]">
                  <td className={`border-r border-b text-center ${sel ? 'border-[#5a9fec] bg-[#80b9fa] font-bold text-white' : 'border-[#c4c4c4] bg-[#efefef]'}`}>{i + 1}</td>
                  <td className="border-r border-b border-[#d4d4d0] bg-[#fffde6]">
                    {head ? (
                      <div className="flex items-center gap-1.5 pl-[2px]"><Toggle />{n}</div>
                    ) : (
                      <div className="flex h-5 items-center whitespace-nowrap">
                        <span className={`ml-2 w-px bg-[#dcdcdc] ${i === 14 ? 'h-2.5 self-start' : 'h-full'}`} />
                        <span className="mr-1.5 h-px w-4 bg-[#dcdcdc]" />
                        {n}
                      </div>
                    )}
                  </td>
                  <td className={sel ? 'border-2 border-[#4f98ee] pl-[3px]' : 'border-r border-b border-[#d0d0d0] pl-1'}>
                    {sel ? (
                      <div className="flex items-center pr-[3px]">
                        <input aria-label={n} defaultValue={v} className="h-4 min-w-0 flex-1 leading-4 outline-none" />
                        <DotsButton label="编辑间距" />
                      </div>
                    ) : (
                      <span className={v === '50%' ? 'text-[#999]' : ''}>{v}</span>
                    )}
                  </td>
                </tr>
              );
            })}
          </tbody>
        </table>
        <div className="mt-3 ml-6 h-[109px] w-1 rounded-full bg-[#e6e6e6]" />
      </div>
      <p className="mt-[5px] pr-[30px] leading-[17px]">
        按指定根数排布输入格式："根数"或"根数+级别+直径"，如4A10；按指定间距排布输入格式："间
        <br />
        距"或"级别+直径+间距"，如A10@500；级别直径为空时取柱箍筋。来源16G101-3第66页。
      </p>
      <div className="mt-[7px] flex justify-end gap-1.5">
        <button className={primary}>确定</button>
        <button className={plain}>取消</button>
      </div>
      <svg width="8" height="8" viewBox="0 0 8 8" fill="#777" className="absolute right-[3px] bottom-[3px]" aria-hidden="true">
        <path d="M6 0h2v2H6zM3 3h2v2H3zM6 3h2v2H6zM0 6h2v2H0zM3 6h2v2H3zM6 6h2v2H6z" />
      </svg>
    </div>
  );
}

function Radio({ id, checked }: { id: string; checked?: boolean }) {
  return <input id={id} type="radio" name="stirrup" defaultChecked={checked} className="h-3.5 w-3.5 appearance-none rounded-full border border-[#8a8a8a] bg-white checked:bg-[radial-gradient(circle,#1a6fe0_0_3px,#fff_4px)]" />;
}

function CountDialog() {
  return (
    <div role="dialog" aria-label="箍筋根数" className="absolute top-[150px] left-[833px] w-[323px] border border-[#bdbdbd] bg-white px-[11px] pb-[26px] text-xs leading-4 text-[#111] shadow-[0_4px_14px_rgba(0,0,0,0.5)]">
      <div className="flex h-[39px] items-center justify-between pr-[1px] pb-0.5">
        <h2 className="text-sm leading-5 text-[#333]">箍筋根数</h2>
        <button aria-label="关闭箍筋根数"><Cross s={12} /></button>
      </div>
      <div className="mt-[14px] grid grid-cols-[auto_auto_1fr] items-center gap-y-1.5 pl-px">
        <Radio id="byCount" />
        <label htmlFor="byCount" className="mr-1.5 ml-1">按指定根数排布</label>
        <div className="flex h-[26px] items-center rounded-[3px] border border-[#2b7de1] px-0.5">
          <span className="bg-[#0078d7] leading-[18px] text-white">2</span>
          <input aria-label="根数" className="h-4 min-w-0 flex-1 outline-none" />
        </div>
        <Radio id="bySpace" checked />
        <label htmlFor="bySpace" className="mr-1.5 ml-1">按指定间距排布</label>
        <input aria-label="间距" defaultValue="500" className="h-[26px] min-w-0 rounded-[3px] border border-[#cfcfcf] px-[3px] text-[#333] outline-none" />
      </div>
      <div className="mt-5 flex justify-between">
        <button className={primary}>确定</button>
        <button className={plain}>取消</button>
      </div>
    </div>
  );
}

function ViewTools() {
  const cube = (top: string, face: string, st: string) => (
    <Svg s={22}>
      <path d="M2 7l4-5h14v13l-4 5H2z" fill={face} stroke={st} />
      <path d="M2 7l4-5h14l-4 5z" fill={top} stroke={B} />
      <path d="M16 7v13" stroke={st} />
    </Svg>
  );
  return (
    <div className="absolute top-0 right-px flex w-8 flex-col items-center rounded border border-[#d4d4d4] bg-white pt-[11px] pb-3">
      <button aria-label="动态观察"><Svg s={22}><circle cx="11" cy="11" r="9" /><ellipse cx="11" cy="11" rx="11" ry="6" transform="rotate(-38 11 11)" stroke={B} /></Svg></button>
      <button aria-label="三维" className="mt-[7px]">
        <Svg s={22}><path d="M2 6l4-4h14v14l-4 4H2zM2 6h14v14M16 6l4-4" /><text x="3" y="17" fontSize="9" fontWeight="bold" fill={B} stroke="none">3D</text></Svg>
      </button>
      <button aria-label="俯视" className="mt-[7px] flex flex-col items-center gap-[7px]">{cube('#bcd6fa', '#fff', D)}<Caret /></button>
      <button aria-label="实体" className="mt-1.5 flex flex-col items-center gap-[7px]">{cube('#cfe2fb', '#cfe2fb', B)}<Caret /></button>
      <button aria-label="全屏" className="mt-1.5"><Svg s={22}><path d="M2 7V2h6M14 2h6v5M20 15v5h-6M8 20H2v-5" /></Svg></button>
      <button aria-label="局部三维" className="mt-[7px]"><Svg s={22}><rect x="2" y="2" width="18" height="18" rx="1" strokeDasharray="3 1.500" /><path d="M11 5l5 3v6l-5 3-5-3V8zM6 8l5 3 5-3M11 11v6" stroke={B} /></Svg></button>
      <div className="mt-1.5 h-px w-6 bg-[#888]" />
      <button aria-label="显示设置" className="mt-1.5"><Svg s={22}><path d="M11 20H2V2h18v10M5 7h2M9 7h8M5 11h2M9 11h6M5 15h3" /><path d="M12 17q4-5 8 0-4 5-8 0z" stroke={B} fill="#fff" /><circle cx="16" cy="17" r="1" fill={B} stroke={B} /></Svg></button>
    </div>
  );
}

/* ---------- display settings ---------- */

type Row = [level: number, name: string, show: 0 | 1 | 2, label?: 3];
const layers: Row[] = [
  [0, '所有构件', 2], [1, '施工段', 2], [2, '土方工程', 0], [2, '基础工程', 0], [2, '主体结构', 1], [2, '二次结构', 0], [2, '装饰装修', 0], [2, '外墙工程', 0], [2, '其它土建', 0], [2, '钢筋工程', 1],
  [1, '轴线', 1, 3], [2, '轴网', 1, 3], [2, '辅助轴线', 1, 3], [1, '柱', 1], [2, '柱', 1], [2, '构造柱', 1], [2, '砌体柱', 1], [2, '约束边缘非阴影区', 1],
  [1, '墙', 2], [2, '剪力墙', 1], [2, '人防门框墙', 1], [2, '砌体墙', 1], [2, '砌体加筋', 0], [2, '保温墙', 1], [2, '暗梁', 0], [2, '墙垛', 0], [2, '幕墙', 1],
  [1, '门窗洞', 0], [2, '门', 0], [2, '窗', 0], [2, '门联窗', 0], [2, '墙洞', 0], [2, '带形窗', 0], [2, '带形洞', 0],
];

function Check({ state, label }: { state: 0 | 1 | 2 | 3; label: string }) {
  return (
    <span className="mx-auto grid h-3.5 w-3.5 place-items-center">
      <input
        type="checkbox"
        aria-label={label}
        defaultChecked={state === 1}
        disabled={state === 3}
        className="col-start-1 row-start-1 h-3.5 w-3.5 appearance-none rounded-xs border border-[#8a8a8a] bg-white checked:border-[#2b7de1] checked:bg-[#2b7de1] disabled:border-[#b5b5b5] disabled:bg-[#f0f0f0]"
      />
      {state === 1 && <svg width="10" height="10" viewBox="0 0 10 10" className="pointer-events-none col-start-1 row-start-1" aria-hidden="true"><path d="M1 5l3 3 5-6" fill="none" stroke="#fff" strokeWidth="1.600" /></svg>}
      {state === 2 && <span className="pointer-events-none col-start-1 row-start-1 h-2.5 w-2.5 border border-[#3a8ff0] bg-[#9cc8fb]" />}
    </span>
  );
}

function DisplayPanel() {
  return (
    <aside className="ml-1 flex w-[289px] shrink-0 flex-col border border-[#cfcfcf] bg-white text-xs leading-4 text-[#333]">
      <div className="flex h-[29px] shrink-0 items-center bg-[#ededf0] pr-2.5 pl-1.5">
        <Grip />
        <h2 className="ml-3">显示设置</h2>
        <button aria-label="关闭显示设置" className="ml-auto"><Cross s={9} color="#999" /></button>
      </div>
      <div className="flex h-[26px] shrink-0 items-end border-b border-[#c4c4c4] pl-[3px]">
        <button className="-mb-px h-6 w-[61px] rounded-t border border-b-0 border-[#c4c4c4] bg-white text-[#1a73e8]">图元显示</button>
        <button className="ml-[3px] h-[22px] w-[60px] rounded-t bg-[#dcdcdc]">楼层显示</button>
      </div>
      <div className="mx-[3px] mt-[3px] flex min-h-0 flex-1 overflow-hidden border border-t-0 border-[#d0d0d0]">
        <table className="h-fit flex-1 table-fixed border-separate border-spacing-0 border-t border-[#d9d9d9]">
          <thead>
            <tr className="h-[21px]">
              <th className="border-r border-b border-[#d9d9d9] font-normal">图层构件</th>
              <th className="w-[63px] border-r border-b border-[#d9d9d9] font-normal">显示图元</th>
              <th className="w-[63px] border-r border-b border-[#d9d9d9] font-normal">显示名称</th>
            </tr>
          </thead>
          <tbody>
            {layers.map(([lv, name, show, lab], i) => {
              const last = lv === 2 && layers[i + 1] && layers[i + 1][0] === 1;
              return (
                <tr key={i} className="h-[21px]">
                  <td className="border-r border-b border-[#d9d9d9]">
                    <div className="flex h-5 items-center whitespace-nowrap">
                      {lv === 0 && <span className="mr-1.5 ml-px flex"><Toggle /></span>}
                      {lv > 0 && <span className="ml-[7px] h-full w-px bg-[#e0e0e0]" />}
                      {lv === 1 && <><span className="h-px w-[3px] bg-[#e0e0e0]" /><span className="mr-1.5 flex"><Toggle /></span></>}
                      {lv === 2 && <><span className={`ml-[9px] w-px bg-[#e0e0e0] ${last ? 'h-2.5 self-start' : 'h-full'}`} /><span className="mr-1.5 h-px w-4 bg-[#e0e0e0]" /></>}
                      {name}
                    </div>
                  </td>
                  <td className="border-r border-b border-[#d9d9d9]"><Check state={show} label={`${name}显示图元`} /></td>
                  <td className="border-r border-b border-[#d9d9d9]"><Check state={lab ?? 0} label={`${name}显示名称`} /></td>
                </tr>
              );
            })}
          </tbody>
        </table>
        <div className="mt-4 mr-[3px] ml-1 h-[153px] w-1 shrink-0 rounded-full bg-[#e6e6e6]" />
      </div>
      <div className="flex h-[38px] shrink-0 items-start justify-end pt-[7px] pr-2">
        <button className="h-[26px] w-[90px] rounded border border-[#c8c8c8] bg-white">恢复默认设置</button>
      </div>
    </aside>
  );
}

/* ---------- status bar and taskbar ---------- */

function StatusBar() {
  const b = 'flex h-[25px] items-center justify-center rounded-xs border border-[#8f8f8f] bg-white';
  return (
    <footer className="flex h-[31px] shrink-0 items-center bg-[#fbfbfb] pr-2.5 pl-0.5 text-xs leading-4 text-[#333]">
      <span className="w-[90px]">层高： 5</span>
      <span className="w-[139px]">标高： 0~5</span>
      <span className="w-[111px]">选中图元：0</span>
      <span className="w-[110px]">隐藏图元：0</span>
      <div className="flex items-center gap-[3px]">
        <button aria-label="正交" className={`${b} w-[25px]`}><Svg s={16}><path d="M2 2v12h12M2 10h4v4" /></Svg></button>
        <button aria-label="捕捉" className="flex h-[25px] w-9 items-center justify-center gap-1.5 rounded-xs border border-[#1a73e8] bg-[#dbe9fb]"><Svg s={17}><rect x="3" y="3" width="12" height="12" rx="2" /><circle cx="3" cy="3" r="2" stroke={B} fill="#fff" /></Svg><Caret /></button>
        <button aria-label="交点" className={`${b} ml-[3px] w-[25px]`}><Svg s={18}><path d="M2 2l14 14M16 2L2 16" stroke="#999" /></Svg></button>
        <button aria-label="角度" className={`${b} ml-[3px] w-9 gap-1.5`}><Svg s={16}><path d="M14 14H1L11 2M6 8l4 4" stroke="#777" /></Svg><Caret /></button>
        <button aria-label="偏移" className={`${b} w-9 gap-1`}><Svg s={18}><path d="M1 5h7M4.500 1.500v7M3 13h4" /><rect x="8" y="11" width="8" height="4" fill={D} /></Svg><Caret /></button>
        <button aria-label="选择" className={`${b} w-[25px]`}><Svg s={16}><rect x="2" y="1.500" width="9" height="9" fill={D} /><path d="M4 13.500h5M14 4v5" /><path d="M8 7l7 5h-3l-1 3z" fill={D} stroke="#fff" strokeWidth=".8" /></Svg></button>
        <button aria-label="曲线" className={`${b} w-[25px]`}><Svg s={16}><path d="M2 15Q2 5 10 3h5" /><path d="M9 8l6 5h-3l-2 2z" fill={D} stroke="none" /></Svg></button>
      </div>
      <svg width="16" height="16" viewBox="0 0 16 16" fill="none" stroke="#444" className="mr-1 ml-4" aria-hidden="true"><path d="M10 1h5v5M15 1L9 7M6 15H1v-5M1 15l6-6" /></svg>
      在此设置柱的计算规则
      <span className="ml-auto flex items-center gap-1.5">
        <svg width="14" height="14" viewBox="0 0 14 14" aria-hidden="true"><circle cx="7" cy="7" r="7" fill="#62b90c" /><path d="M3.500 7l2.500 2.500L10.500 4.500" fill="none" stroke="#fff" strokeWidth="1.300" /></svg>
        实时计算已完成
      </span>
    </footer>
  );
}

const swirl = <path d="M27 2C14-2 2 6 3 17c1 11 15 15 22 7 4-4 4-9 1-13-2 2-6 1-8 5 3 0 4 3 1 5-5 3-10-2-8-8s9-7 16-11z" fill="#1689e6" />;
const cloud = <path d="M8 21a4.500 4.500 0 1 1 1-9c2-6 10-6 12 0-3 1-4 9-9 9-3 0-5-4-1-5M16 21h7a4.500 4.500 0 0 0-1-9" fill="none" stroke="#fff" strokeWidth="2.600" />;
const eIcon = <><circle cx="15" cy="15" r="13" fill="#fff" /><path d="M25 18c-3 8-17 8-18-2C6 4 24 3 25 16H12c1 6 7 5 8 2zM12 13h8c-1-4-7-4-8 0z" fill="#4fb51f" /><path d="M3 24C6 14 18 4 28 3" fill="none" stroke="#7fd42a" strokeWidth="2" /></>;

const apps: { name: string; icon: React.ReactNode; active?: boolean }[] = [
  { name: '浏览器', icon: eIcon },
  { name: '广联达', icon: swirl },
  { name: '云盘', icon: <><rect width="30" height="30" rx="5" fill="#f9ae1a" />{cloud}</> },
  { name: '预算', icon: <><rect width="30" height="30" rx="5" fill="#3b8ef5" /><text x="15" y="23.500" fontSize="23" textAnchor="middle" fill="#fff">预</text></> },
  { name: '土建计量', icon: <><rect width="30" height="30" rx="5" fill="#2a6bf6" /><path d="M5 11l13-6 8 4-12 5zM14 15l5-2v12l-5-3z" fill="#fff" /></>, active: true },
];

function Taskbar() {
  const tray = (c: React.ReactNode) => <svg width="16" height="16" viewBox="0 0 30 30" aria-hidden="true">{c}</svg>;
  return (
    <footer className="relative flex h-10 shrink-0 items-center overflow-hidden border-t border-[#1d3d5c] bg-[linear-gradient(90deg,#235f92_0%,#2b78b0_4%,#5fb0de_20%,#66b5e0_27%,#3f9bd2_42%,#2c83c6_60%,#2a78bd_68%,#1a5699_75%,#173f72_82%,#193a66_100%)] shadow-[inset_0_1px_0_rgba(255,255,255,0.45)]">
      <svg width="120" height="40" viewBox="0 0 120 40" className="absolute top-0 left-[1290px] blur-[1px]" aria-hidden="true"><path d="M10 0h18q34 18 54 40H66Q42 14 10 0z" fill="#a9d0f2" opacity=".85" /></svg>
      <button aria-label="开始菜单" className="ml-2">
        <svg width="38" height="38" viewBox="0 0 38 38" aria-hidden="true">
          <defs><radialGradient id="orb" cx=".5" cy=".85" r=".8"><stop offset="0" stopColor="#6fd0f5" /><stop offset=".5" stopColor="#1d6aa8" /><stop offset="1" stopColor="#6c93b5" /></radialGradient></defs>
          <circle cx="19" cy="19" r="17.500" fill="url(#orb)" stroke="#12405f" />
          <path d="M10 12q4-3 8-1l-2 8q-4-2-8 0z" fill="#f06a2a" /><path d="M20 12q4 2 9 0l-2 8q-5 1-9-1z" fill="#8cc63c" /><path d="M8 21q4-2 8 0l-2 7q-4-2-8 0z" fill="#38a8ea" /><path d="M18 21q4 2 8 1l-2 7q-4 1-8-1z" fill="#fbd12c" />
        </svg>
      </button>
      <span className="ml-3 h-[30px] w-2 bg-[radial-gradient(#123_1px,transparent_1px)] bg-[length:3px_4px]" />
      <div className="ml-2.5 flex h-full gap-1">
        {apps.map((a) => (
          <button key={a.name} aria-label={a.name} className={`flex h-full w-[58px] items-center justify-center rounded-xs border border-[#1f5378] shadow-[inset_0_0_0_1px_rgba(255,255,255,0.5)] ${a.active ? 'bg-[linear-gradient(135deg,#e6f4fc,#8cc6e8)]' : 'bg-[linear-gradient(160deg,#9fcbe6,#4894c6_50%,#5aabd8)]'}`}>
            <svg width="32" height="32" viewBox="0 0 30 30" aria-hidden="true">{a.icon}</svg>
          </button>
        ))}
      </div>
      <div className="ml-auto flex h-full items-center text-xs text-white">
        <span className="mr-2.5 h-[30px] w-2 bg-[radial-gradient(#0a1a33_1px,transparent_1px)] bg-[length:3px_4px]" />
        <div className="flex items-center gap-2">
          <div className="mb-1 flex items-center gap-2">
            {tray(<><rect x="1" y="12" width="28" height="14" rx="2" fill="#ddd" /><path d="M4 16h22M4 19h22M8 23h14" stroke="#555" strokeWidth="2" strokeDasharray="2 1" /><path d="M15 12V8q6 0 8-5" stroke="#ddd" fill="none" strokeWidth="2" /></>)}
            {tray(<><circle cx="15" cy="15" r="13" fill="#1a2bb0" stroke="#dfe6ff" strokeWidth="3" /><text x="15" y="22" fontSize="20" fontWeight="bold" fill="#fff" textAnchor="middle">?</text></>)}
            <svg width="10" height="18" viewBox="0 0 10 18" fill="none" stroke="#fff" aria-hidden="true"><path d="M3.500 2.500v-2h5v4h-2M.5 2.500h5v4h-5z" /><path d="M2 13h6l-3 4z" fill="#fff" stroke="none" /></svg>
          </div>
          {tray(swirl)}
          {tray(<><rect width="30" height="30" rx="3" fill="#fff" /><g transform="translate(3 0) scale(.8)">{swirl}</g><path d="M4 22h22v6H4z" fill="#f08a1c" /></>)}
          {tray(<><rect width="30" height="30" rx="5" fill="#f9ae1a" />{cloud}</>)}
          {tray(eIcon)}
          {tray(<><path d="M6 0h8v8h2v10h-3v6H8v-6H4V8h2z" fill="#999" /><circle cx="21" cy="21" r="9" fill="#2fae2f" /><path d="M16 21l4 4 6-8" stroke="#fff" strokeWidth="3" fill="none" /></>)}
          {tray(<><path d="M3 11h6l9-8v25l-9-8H3z" fill="#e0552a" stroke="#f5c0a0" /><path d="M22 9q5 6 0 13" stroke="#b33" fill="none" strokeWidth="2" /></>)}
          {tray(<><circle cx="15" cy="15" r="14" fill="#2c9a2c" /><circle cx="15" cy="15" r="11" fill="#fbd926" /><path d="M15 8v14M8 15h14" stroke="#1c7c1c" strokeWidth="4" /></>)}
          {tray(<path d="M2 22h3v5H2zM8 18h3v9H8zM14 13h3v14h-3zM20 8h3v19h-3zM26 3h3v24h-3z" fill="#fff" />)}
          {tray(<><path d="M2 11h5l8-7v23l-8-7H2z" fill="#fff" /><path d="M19 10q4 5 0 11M23 6q7 9 0 19" stroke="#fff" fill="none" strokeWidth="2" /></>)}
        </div>
        <div className="ml-4 text-center leading-[18px]">9:52<br />2025/5/17</div>
        <span className="ml-[22px] flex h-[15px] w-[15px] items-center justify-center bg-white"><svg width="5" height="8" viewBox="0 0 5 8" aria-hidden="true"><path d="M0 0l5 4-5 4z" fill="#15284a" /></svg></span>
        <button aria-label="显示桌面" className="ml-3 h-full w-3.5 border border-[#0f2747] bg-[linear-gradient(180deg,#6f88a8,#2a4a77)]" />
      </div>
    </footer>
  );
}

export default function App() {
  return (
    <div className={`flex h-screen flex-col overflow-hidden bg-white ${FONT}`}>
      <TitleBar />
      <MenuBar />
      <Ribbon />
      <ContextBar />
      <main className="flex min-h-0 flex-1">
        <NavPanel />
        <ComponentColumn />
        <div className="relative min-w-0 flex-1 overflow-hidden bg-black">
          <Drawing />
          <ViewTools />
          <ParamsDialog />
          <CountDialog />
        </div>
        <DisplayPanel />
      </main>
      <StatusBar />
      <Taskbar />
    </div>
  );
}
